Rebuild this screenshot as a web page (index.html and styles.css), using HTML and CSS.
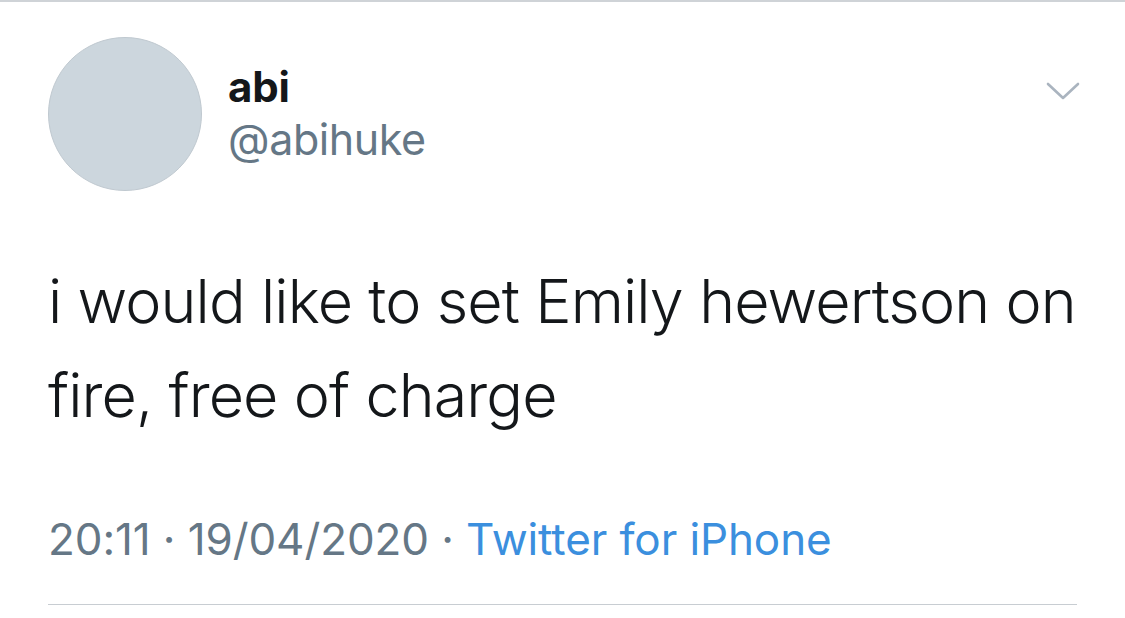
FILE: index.html
```html
<!DOCTYPE html>
<html>
<head>
<meta charset="utf-8">
<link rel="stylesheet" href="styles.css">
</head>
<body>
<div class="tweet">
  <div class="header">
    <div class="avatar"></div>
    <div class="names">
      <div class="name">abi</div>
      <div class="handle">@abihuke</div>
    </div>
    <svg class="chevron" width="34" height="20" viewBox="0 0 34 20">
      <path d="M2 3 L17 17 L32 3" fill="none" stroke="#aab4bf" stroke-width="2.6" stroke-linecap="round" stroke-linejoin="round"/>
    </svg>
  </div>
  <div class="text">i would like to set Emily hewertson on fire, free of charge</div>
  <div class="meta"><span>20:11 · 19/04/2020 · </span><span class="source">Twitter for iPhone</span></div>
  <div class="rule"></div>
</div>
</body>
</html>
```
FILE: styles.css
```css
html, body {
  margin: 0;
  padding: 0;
  background: #ffffff;
}
body {
  font-family: Inter, "Noto Sans", sans-serif;
  border-top: 2px solid #cfd3d7;
  width: 1125px;
  height: 616px;
  overflow: hidden;
}
.tweet {
  padding: 0 48px;
}
.header {
  display: flex;
  align-items: flex-start;
  padding-top: 35px;
}
.avatar {
  width: 152px;
  height: 152px;
  border-radius: 50%;
  background: #ccd6dd;
  border: 1px solid #c0c9d0;
  flex: none;
}
.names {
  margin-left: 26px;
  padding-top: 28px;
  flex: 1;
}
.name {
  font-weight: 700;
  font-size: 42px;
  line-height: 44px;
  color: #14171a;
  letter-spacing: -0.2px;
}
.handle {
  font-size: 43px;
  line-height: 60px;
  color: #657786;
  letter-spacing: -0.4px;
}
.chevron {
  margin-top: 44px;
  margin-right: -3px;
}
.text {
  margin-top: 63px;
  margin-right: -40px;
  font-size: 61px;
  line-height: 94px;
  color: #14171a;
  font-weight: 300;
  letter-spacing: -0.9px;
}
.meta {
  margin-top: 67px;
  font-size: 44px;
  line-height: 60px;
  color: #657786;
  letter-spacing: -0.1px;
}
.source {
  color: #3b8fde;
}
.rule {
  margin-top: 35px;
  height: 1px;
  background: #c8cdd2;
}
```
